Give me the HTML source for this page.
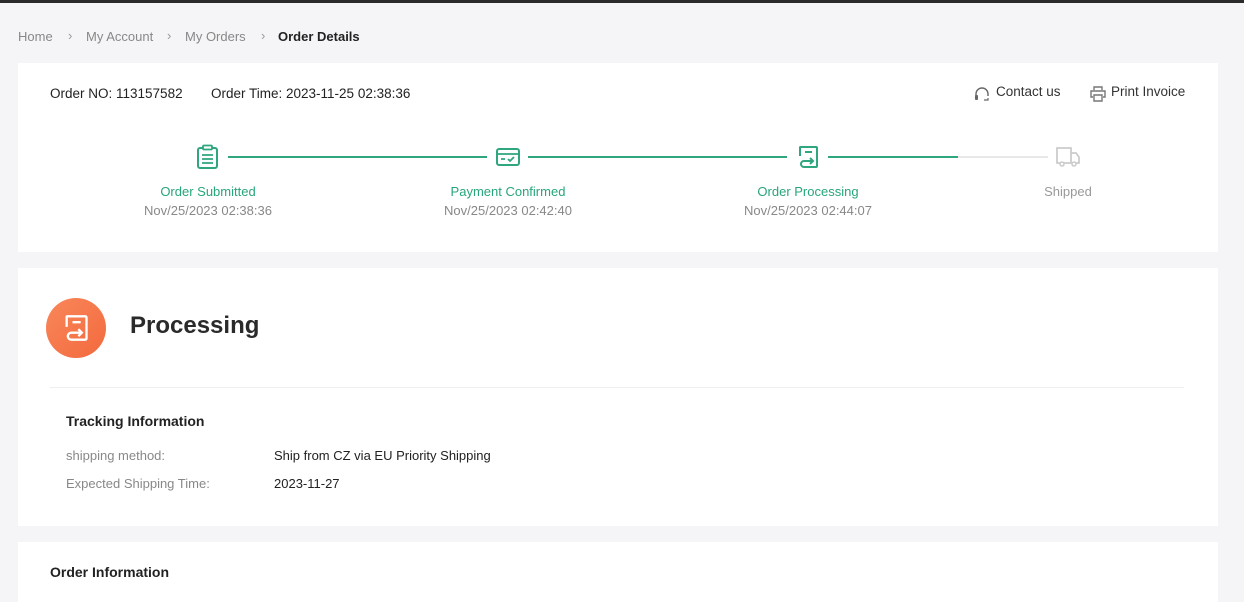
<!DOCTYPE html>
<html><head><meta charset="utf-8"><style>
*{margin:0;padding:0;box-sizing:border-box}
body{width:1244px;height:592px;overflow:hidden;background:#f5f5f7;font-family:"Liberation Sans",sans-serif;color:#222;position:relative}
.a{position:absolute;white-space:nowrap}
.card{position:absolute;background:#fff;left:18px;width:1200px}
.g{color:#27a67a}
.s{font-size:13px}
</style></head><body>
<div class="a" style="left:0;top:0;width:1244px;height:3px;background:#2b2b2b"></div>
<div class="a s" style="left:18px;top:29px;color:#888">Home</div>
<div class="a s" style="left:68px;top:28px;color:#999">›</div>
<div class="a s" style="left:86px;top:29px;color:#888">My Account</div>
<div class="a s" style="left:167px;top:28px;color:#999">›</div>
<div class="a s" style="left:185px;top:29px;color:#888">My Orders</div>
<div class="a s" style="left:261px;top:28px;color:#999">›</div>
<div class="a s" style="left:278px;top:29px;color:#222;font-weight:bold">Order Details</div>

<div class="card" style="top:63px;height:189px"></div>
<div class="a" style="left:50px;top:86px;font-size:13.5px">Order NO: 113157582</div>
<div class="a" style="left:211px;top:86px;font-size:13.5px">Order Time: 2023-11-25 02:38:36</div>
<svg class="a" style="left:973px;top:86px" width="18" height="16" viewBox="0 0 18 16"><path d="M3 10V8a6 6 0 0 1 12 0v2" fill="none" stroke="#666" stroke-width="1.4"/><rect x="2" y="9" width="3" height="5" rx="1" fill="#666"/><path d="M15 12v2h-4" fill="none" stroke="#666" stroke-width="1.2"/></svg>
<div class="a" style="left:996px;top:84px;font-size:13.5px;color:#333">Contact us</div>
<svg class="a" style="left:1089px;top:85px" width="18" height="17" viewBox="0 0 18 17"><path d="M5 5V2h8v3M4 12H2V6h14v6h-2M5 10h8v6H5z" fill="none" stroke="#777" stroke-width="1.4"/></svg>
<div class="a" style="left:1111px;top:84px;font-size:13.5px;color:#333">Print Invoice</div>

<div class="a" style="left:228px;top:156px;width:259px;height:2px;background:#2fa67c"></div>
<div class="a" style="left:528px;top:156px;width:259px;height:2px;background:#2fa67c"></div>
<div class="a" style="left:828px;top:156px;width:130px;height:2px;background:#2fa67c"></div>
<div class="a" style="left:958px;top:156px;width:90px;height:2px;background:#e8e8e8"></div>
<svg class="a" style="left:196px;top:144px" width="24" height="26" viewBox="0 0 24 26"><rect x="2" y="4" width="19" height="20" rx="2" fill="none" stroke="#2fa67c" stroke-width="2"/><rect x="7" y="1.5" width="9" height="4" rx="1" fill="#fff" stroke="#2fa67c" stroke-width="1.8"/><path d="M6 11h11M6 15h11M6 19h11" stroke="#2fa67c" stroke-width="1.8"/></svg>
<svg class="a" style="left:495px;top:147px" width="26" height="20" viewBox="0 0 26 20"><rect x="2" y="2" width="22" height="16" rx="2" fill="none" stroke="#2fa67c" stroke-width="2"/><path d="M2 7h22M6 12h4M13 12l2 2 4-4" fill="none" stroke="#2fa67c" stroke-width="1.8"/></svg>
<svg class="a" style="left:797px;top:145px" width="22" height="24" viewBox="0 0 22 24"><path d="M3 11V2.5a0.5 0.5 0 0 1 0.5-0.5H19a1 1 0 0 1 1 1V21a1 1 0 0 1-1 1H7a3 3 0 0 1 0-6H16M13 13l3 3-3 3M8 7h7" fill="none" stroke="#2fa67c" stroke-width="2"/></svg>
<svg class="a" style="left:1055px;top:146px" width="26" height="22" viewBox="0 0 26 22"><path d="M2 2h14v15H2zM16 7h5l3 4v6h-8" fill="none" stroke="#ccc" stroke-width="1.8"/><circle cx="7" cy="18" r="2" fill="#fff" stroke="#ccc" stroke-width="1.6"/><circle cx="19" cy="18" r="2" fill="#fff" stroke="#ccc" stroke-width="1.6"/></svg>
<div class="a s g" style="left:148px;top:184px;width:120px;text-align:center">Order Submitted</div>
<div class="a s" style="left:138px;top:203px;width:140px;text-align:center;color:#888">Nov/25/2023 02:38:36</div>
<div class="a s g" style="left:438px;top:184px;width:140px;text-align:center">Payment Confirmed</div>
<div class="a s" style="left:438px;top:203px;width:140px;text-align:center;color:#888">Nov/25/2023 02:42:40</div>
<div class="a s g" style="left:738px;top:184px;width:140px;text-align:center">Order Processing</div>
<div class="a s" style="left:738px;top:203px;width:140px;text-align:center;color:#888">Nov/25/2023 02:44:07</div>
<div class="a s" style="left:1018px;top:184px;width:100px;text-align:center;color:#999">Shipped</div>

<div class="card" style="top:268px;height:258px"></div>
<div class="a" style="left:46px;top:298px;width:60px;height:60px;border-radius:50%;background:linear-gradient(135deg,#f9875a,#f26a3e)"></div>
<svg class="a" style="left:63px;top:314px" width="26" height="28" viewBox="0 0 22 24"><path d="M3 11V2.5a0.5 0.5 0 0 1 0.5-0.5H19a1 1 0 0 1 1 1V21a1 1 0 0 1-1 1H7a3 3 0 0 1 0-6H16M13 13l3 3-3 3M8 7h7" fill="none" stroke="#fff" stroke-width="2"/></svg>
<div class="a" style="left:130px;top:312px;font-size:24px;font-weight:bold;color:#2a2a2a">Processing</div>
<div class="a" style="left:50px;top:387px;width:1134px;height:1px;background:#eee"></div>
<div class="a" style="left:66px;top:413px;font-size:14px;font-weight:bold">Tracking Information</div>
<div class="a s" style="left:66px;top:448px;color:#888">shipping method:</div>
<div class="a s" style="left:274px;top:448px;color:#222">Ship from CZ via EU Priority Shipping</div>
<div class="a s" style="left:66px;top:476px;color:#888">Expected Shipping Time:</div>
<div class="a s" style="left:274px;top:476px;color:#222">2023-11-27</div>

<div class="card" style="top:542px;height:60px"></div>
<div class="a" style="left:50px;top:564px;font-size:14px;font-weight:bold">Order Information</div>
</body></html>
